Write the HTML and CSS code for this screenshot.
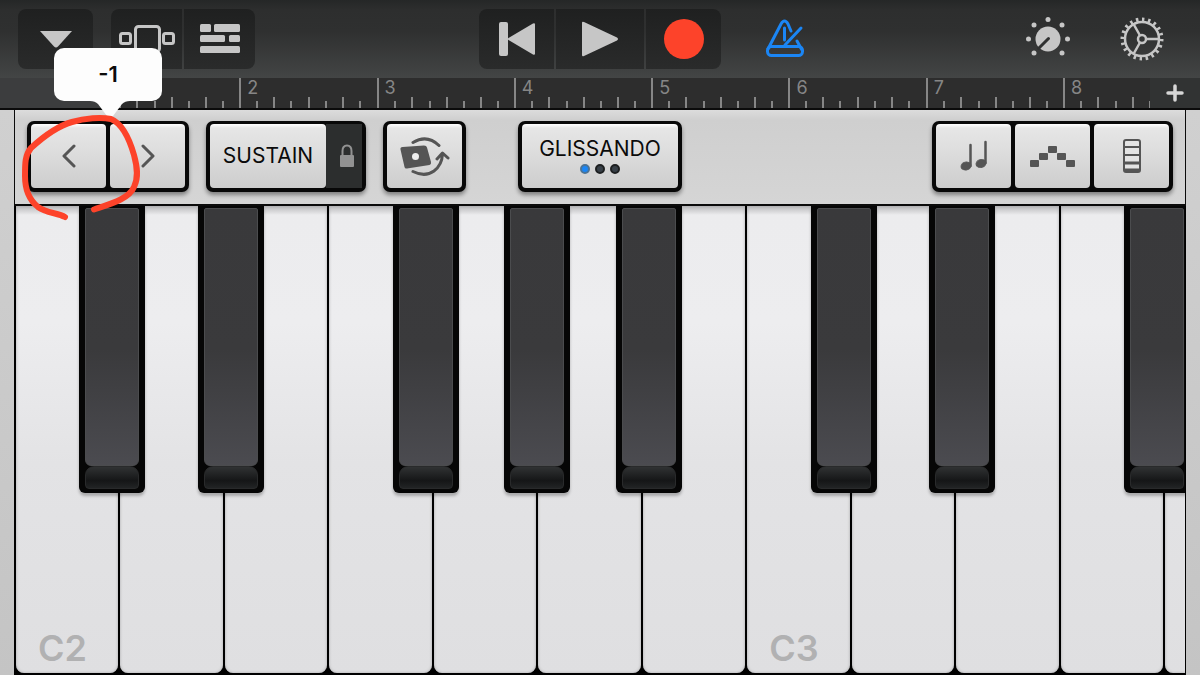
FILE: index.html
```html
<!DOCTYPE html>
<html lang="en">
<head>
  <meta charset="UTF-8">
  <meta name="viewport" content="width=device-width, initial-scale=1.0">
  <title>Keyboard</title>
  <link rel="stylesheet" href="styles.css">
</head>
<body>
  <header class="control-bar">
    <div class="bar-left">
      <div class="button-group">
        <button class="bar-button" aria-label="Menu">
          <svg width="34" height="18" viewBox="0 0 34 18"><path d="M1 1h32L19 16.500q-2 2-4 0z" fill="#c6c6c6"/></svg>
        </button>
      </div>
      <div class="button-group">
        <button class="bar-button view" aria-label="Instruments">
          <svg width="56" height="30" viewBox="0 0 56 30" fill="none" stroke="#c6c6c6" stroke-width="3">
            <rect x="1.500" y="9.500" width="10" height="10" rx="2"/>
            <rect x="16.500" y="2.500" width="24" height="25" rx="3"/>
            <rect x="44.500" y="9.500" width="10" height="10" rx="2"/>
          </svg>
        </button>
        <button class="bar-button view" aria-label="Tracks">
          <svg width="40" height="30" viewBox="0 0 40 30" fill="#c6c6c6">
            <rect width="11" height="8" rx="1.500"/><rect x="14" width="26" height="8" rx="1.500"/>
            <rect y="11" width="25" height="7" rx="1.500"/><rect x="29" y="11" width="11" height="7" rx="1.500"/>
            <rect y="22" width="40" height="7" rx="1.500"/>
          </svg>
        </button>
      </div>
    </div>
    <div class="button-group">
      <button class="bar-button" aria-label="Go to beginning">
        <svg width="38" height="36" viewBox="0 0 38 36" fill="#c6c6c6">
          <rect x="1" y="1" width="9" height="34" rx="2"/>
          <path d="M35 2.500q2-1 2 1v29q0 2-2 1L10.500 19q-1.500-1 0-2z"/>
        </svg>
      </button>
      <button class="bar-button play" aria-label="Play">
        <svg width="38" height="36" viewBox="0 0 38 36" fill="#c6c6c6"><path d="M1 2q0-2 2-1l33 15.500q2 1.500 0 3L3 35q-2 1-2-1z"/></svg>
      </button>
      <button class="bar-button" aria-label="Record">
        <svg width="40" height="40" viewBox="0 0 40 40"><circle cx="20" cy="20" r="20" fill="#fd432a"/></svg>
      </button>
    </div>
    <div class="bar-right">
      <button class="icon-button metronome" aria-label="Metronome">
        <svg width="40" height="40" viewBox="0 0 40 40" fill="none" stroke="#1b86f5" stroke-width="3" stroke-linecap="round" stroke-linejoin="round">
          <path d="M26 12l-3-7q-3.500-6-7 0L3 30"/>
          <path d="M32 22l5 9"/>
          <rect x="2.500" y="27.500" width="35" height="9" rx="4"/>
          <path d="M19.500 9v12M20 26l16-17"/>
        </svg>
      </button>
      <button class="icon-button knob" aria-label="Track controls">
        <svg width="44" height="44" viewBox="0 0 44 44" fill="#c6c6c6">
          <circle cx="22" cy="22" r="12.500"/>
          <path d="M22.500 21.500l-10 10" stroke="#303131" stroke-width="3" stroke-linecap="round"/>
          <circle cx="22" cy="2.500" r="2.500"/><circle cx="8" cy="8" r="2.500"/><circle cx="36" cy="8" r="2.500"/>
          <circle cx="2.500" cy="22" r="2.500"/><circle cx="41.500" cy="22" r="2.500"/>
          <circle cx="8" cy="36" r="2.500"/><circle cx="36" cy="36" r="2.500"/>
        </svg>
      </button>
      <button class="icon-button" aria-label="Settings">
        <svg width="44" height="44" viewBox="0 0 44 44" fill="none" stroke="#c6c6c6">
          <circle cx="22" cy="22" r="17" stroke-width="2.500"/>
          <circle cx="22" cy="22" r="19.500" stroke-width="4" pathLength="100" stroke-dasharray="2 3"/>
          <circle cx="22" cy="22" r="4" stroke-width="2.500"/>
          <path d="M26 22h13M20 18.500L13.500 7M20 25.500L13.500 37" stroke-width="2.500"/>
        </svg>
      </button>
    </div>
  </header>

  <div class="timeline">
    <div class="ruler">
      <div class="measure"></div>
      <div class="measure">2</div>
      <div class="measure">3</div>
      <div class="measure">4</div>
      <div class="measure">5</div>
      <div class="measure">6</div>
      <div class="measure">7</div>
      <div class="measure">8</div>
    </div>
    <button class="add-section" aria-label="Add section">
      <svg width="18" height="18" viewBox="0 0 18 18"><path d="M9 2v14M2 9h14" stroke="#d6d6d6" stroke-width="3.500" stroke-linecap="round"/></svg>
    </button>
  </div>

  <main class="instrument">
    <div class="toolbar">
      <div class="tools">
        <div class="pad-group octave">
          <button class="pad" aria-label="Octave down">
            <svg width="14" height="24" viewBox="0 0 14 24"><path d="M12 2L2 12l10 10" fill="none" stroke="#555" stroke-width="3" stroke-linecap="round" stroke-linejoin="round"/></svg>
          </button>
          <button class="pad" aria-label="Octave up">
            <svg width="14" height="24" viewBox="0 0 14 24"><path d="M2 2l10 10L2 22" fill="none" stroke="#555" stroke-width="3" stroke-linecap="round" stroke-linejoin="round"/></svg>
          </button>
          <output class="callout">-1
            <svg class="callout-tail" width="40" height="18" viewBox="0 0 40 18"><path d="M0 0h40q-5 0-8 3L23 15q-3 3-6 0L8 3Q5 0 0 0z" fill="#fdfdfd"/></svg>
          </output>
          <svg class="marker" width="124" height="112" viewBox="0 0 124 112">
            <path d="M48 107C41 103 29 103 21 97C11 89 8 77 8 66C8 53 8 45 14 38C27 26 41 16 55 12C68 8 84 7 94 9C106 14 113 31 117 45C120 56 122 67 117 77C112 89 93 94 77 99.500" fill="none" stroke="#fd432a" stroke-width="6" stroke-linecap="round" stroke-linejoin="round"/>
          </svg>
        </div>
        <div class="pad-group">
          <button class="pad sustain">SUSTAIN</button>
          <button class="lock" aria-label="Lock sustain">
            <svg width="16" height="24" viewBox="0 0 16 24"><path d="M3.500 12V7q0-5.500 4.500-5.500T12.500 7v5" fill="none" stroke="#929292" stroke-width="2"/><rect x="1" y="11" width="14" height="12" rx="1" fill="#929292"/></svg>
          </button>
        </div>
        <div class="pad-group">
          <button class="pad" aria-label="Flip keyboard">
            <svg width="50" height="40" viewBox="0 0 50 40">
              <g fill="none" stroke="#555" stroke-width="3" stroke-linecap="round" stroke-linejoin="round">
                <path d="M13 6.500Q27-2 39 9.500M13 35.500Q25 41.500 34 35Q42 29 42.500 18M37 23l5.500-6 5.500 5" />
              </g>
              <path d="M2.500 11L24 9.500q2.500 0 3 2L31 26q.500 2.500-1.500 3L7 32.500q-2 .500-2.500-1.500L.500 13.500q-.500-2.500 2-2.500z" fill="#555"/>
              <circle cx="15.500" cy="20.500" r="3.500" fill="#eee"/>
            </svg>
          </button>
        </div>
      </div>
      <div class="pad-group">
        <button class="pad glissando">
          GLISSANDO
          <span class="dots"><i class="dot active"></i><i class="dot"></i><i class="dot"></i></span>
        </button>
      </div>
      <div class="tools end">
        <div class="pad-group">
          <button class="pad" aria-label="Scale">
            <svg width="30" height="32" viewBox="0 0 30 32" fill="#555" stroke="#555">
              <ellipse cx="7" cy="26" rx="5" ry="4" transform="rotate(-15 7 26)"/><path d="M11.500 26V5" stroke-width="2.500" stroke-linecap="round"/>
              <ellipse cx="22" cy="23.500" rx="5" ry="4" transform="rotate(-15 22 23.500)"/><path d="M26.500 23V2" stroke-width="2.500" stroke-linecap="round"/>
            </svg>
          </button>
          <button class="pad" aria-label="Arpeggiator">
            <svg width="46" height="22" viewBox="0 0 46 22" fill="#555">
              <rect x="0" y="15" width="9" height="7" rx="1"/><rect x="9" y="8" width="9" height="7" rx="1"/>
              <rect x="18" y="1" width="9" height="7" rx="1"/><rect x="27" y="8" width="9" height="7" rx="1"/>
              <rect x="36" y="15" width="9" height="7" rx="1"/>
            </svg>
          </button>
          <button class="pad" aria-label="Keyboard layout">
            <svg width="18" height="34" viewBox="0 0 18 34">
              <rect x="1" y="1" width="16" height="32" rx="2" fill="#e4e4e4" stroke="#555" stroke-width="2"/>
              <path d="M2 8h14M2 16h14" stroke="#555" stroke-width="2"/>
              <path d="M2 24h14M2 31h14" stroke="#555" stroke-width="3"/>
            </svg>
          </button>
        </div>
      </div>
    </div>

    <div class="keyboard">
      <div class="note"><button class="white-key">C2</button><button class="black-key low" aria-label="C sharp 2"></button></div>
      <div class="note"><button class="white-key" aria-label="D2"></button><button class="black-key high" aria-label="D sharp 2"></button></div>
      <div class="note"><button class="white-key" aria-label="E2"></button></div>
      <div class="note"><button class="white-key" aria-label="F2"></button><button class="black-key low" aria-label="F sharp 2"></button></div>
      <div class="note"><button class="white-key" aria-label="G2"></button><button class="black-key" aria-label="G sharp 2"></button></div>
      <div class="note"><button class="white-key" aria-label="A2"></button><button class="black-key high" aria-label="A sharp 2"></button></div>
      <div class="note"><button class="white-key" aria-label="B2"></button></div>
      <div class="note"><button class="white-key">C3</button><button class="black-key low" aria-label="C sharp 3"></button></div>
      <div class="note"><button class="white-key" aria-label="D3"></button><button class="black-key high" aria-label="D sharp 3"></button></div>
      <div class="note"><button class="white-key" aria-label="E3"></button></div>
      <div class="note"><button class="white-key" aria-label="F3"></button><button class="black-key low" aria-label="F sharp 3"></button></div>
      <div class="note"><button class="white-key" aria-label="G3"></button></div>
    </div>
  </main>
</body>
</html>
```
FILE: styles.css
```css
* {
  box-sizing: border-box;
}
body {
  margin: 0;
  height: 100vh;
  display: flex;
  flex-direction: column;
  overflow: hidden;
  font-family: Inter, "Liberation Sans", sans-serif;
  background: #000;
  user-select: none;
}
button {
  margin: 0;
  padding: 0;
  border: 0;
  background: none;
  font-family: inherit;
  color: inherit;
}
svg {
  display: block;
}

/* Control bar */
.control-bar {
  display: grid;
  grid-template-columns: 1fr auto 1fr;
  align-items: center;
  padding: 9px 18px;
  background: linear-gradient(#252727 0, #2d2e2e 10px, #2f3030 40%, #434545);
}
.bar-left,
.bar-right {
  display: flex;
  align-items: center;
  gap: 18px;
}
.bar-right {
  padding-right: 18px;
}
.button-group {
  display: flex;
  gap: 2px;
  border-radius: 8px;
  overflow: hidden;
}
.bar-button {
  display: flex;
  align-items: center;
  justify-content: center;
  width: 75px;
  height: 60px;
  background: linear-gradient(#1f2020, #2a2b2b);
}
.bar-button.view {
  width: 71px;
}
.bar-button.play {
  width: 88px;
}
.icon-button {
  display: flex;
}
.metronome {
  margin-left: 44px;
}
.knob {
  margin-left: auto;
  margin-right: 32px;
}

/* Timeline */
.timeline {
  display: flex;
  height: 32px;
  padding-left: 102px;
  background: #3c3d3e;
  border-bottom: 2px solid #0b0b0b;
}
.ruler {
  flex: 1;
  display: flex;
  overflow: hidden;
  background: #2d2d2d;
}
.measure {
  flex: 0 0 13.1%;
  padding-left: 6px;
  border-left: 2px solid #868686;
  font-size: 18px;
  line-height: 20px;
  color: #868686;
  background:
    repeating-linear-gradient(to right, #868686 0 2px, transparent 2px 12.5%) border-box bottom / 100% 7px no-repeat,
    repeating-linear-gradient(to right, #868686 0 2px, transparent 2px 25%) border-box bottom / 100% 11px no-repeat;
}
.add-section {
  width: 50px;
  display: flex;
  align-items: center;
  justify-content: center;
  background: #313333;
}

/* Instrument */
.instrument {
  flex: 1;
  min-height: 0;
  display: flex;
  flex-direction: column;
  padding: 0 14px;
  background: linear-gradient(#d0d0d0, #c4c4c4);
}
.toolbar {
  display: grid;
  grid-template-columns: 1fr auto 1fr;
  padding: 11px 12px 12px;
  border: 1px solid #0b0b0b;
  border-top: 0;
  border-bottom-width: 2px;
  background: linear-gradient(#dcdcdc, #cfcfcf 10px, #d5d5d5);
}
.tools {
  display: flex;
  gap: 17px;
}
.tools.end {
  justify-content: flex-end;
}
.pad-group {
  display: flex;
  gap: 4px;
  padding: 3px 4px 4px;
  border-radius: 7px;
  background: #080808;
  box-shadow: 0 3px 4px rgba(0, 0, 0, 0.4);
}
.pad {
  display: flex;
  align-items: center;
  justify-content: center;
  width: 75px;
  height: 64px;
  border-radius: 4px;
  background: linear-gradient(#fff 0, #e6e6e6 4px, #dedede 40%, #cdcdcd);
  font-size: 21px;
  line-height: 24px;
  color: #0b0b0b;
}
.sustain {
  width: 116px;
}
.lock {
  display: flex;
  align-items: center;
  justify-content: center;
  width: 36px;
  margin-left: -4px;
  padding-left: 6px;
  background: #2c2e2e;
}
.glissando {
  flex-direction: column;
  gap: 3px;
  width: 156px;
  padding-bottom: 2px;
}
.dots {
  display: flex;
  gap: 5px;
}
.dot {
  width: 10px;
  height: 10px;
  border: 2px solid #1d1f20;
  border-radius: 50%;
  background: #384048;
}
.dot.active {
  border-color: #4c7395;
  background: #1b86f5;
}

/* Octave value shown over the arrows */
.octave {
  position: relative;
  z-index: 2;
}
.callout {
  position: absolute;
  top: -73px;
  left: 27px;
  width: 108px;
  border-radius: 10px;
  background: #fdfdfd;
  font-size: 22px;
  font-weight: 600;
  line-height: 53px;
  text-align: center;
  color: #0b0b0b;
}
.callout-tail {
  position: absolute;
  top: 100%;
  left: 36px;
}
.marker {
  position: absolute;
  top: -11px;
  left: -10px;
  pointer-events: none;
}

/* Keys */
.keyboard {
  flex: 1;
  min-height: 0;
  display: flex;
  overflow: hidden;
  padding-bottom: 2px;
  border: 1px solid #000;
  border-width: 0 1px;
  background: #000;
}
.note {
  position: relative;
  flex: 0 0 8.93%;
}
.white-key {
  display: flex;
  align-items: flex-end;
  width: calc(100% - 2px);
  height: 100%;
  margin-left: 1px;
  padding: 0 0 3px 22px;
  border-radius: 0 0 8px 8px;
  background: linear-gradient(#b9b9bb 0, #ececee 9px, #ededef 25%, #e3e3e5 55%, #dfdfe1);
  box-shadow: inset 0 0 3px #a8a8aa;
  font-size: 36px;
  font-weight: 600;
  line-height: 44px;
  color: #b1b1b2;
}
.black-key {
  position: absolute;
  z-index: 1;
  top: 0;
  right: -33px;
  width: 66px;
  height: calc(61% + 2px);
  border-radius: 0 0 6px 6px;
  background: #060606;
  box-shadow: 0 3px 3px rgba(0, 0, 0, 0.25);
}
.black-key.low {
  right: -26px;
}
.black-key.high {
  right: -40px;
}
.black-key::before {
  content: "";
  position: absolute;
  inset: 2px 6px 27px;
  border: 1px solid #4b4c4e;
  border-radius: 2px 2px 6px 6px;
  background: linear-gradient(#39393b, #3a3a3c 55%, #4b4b50);
}
.black-key::after {
  content: "";
  position: absolute;
  inset: auto 6px 4px;
  height: 21px;
  border: 1px solid #292a2b;
  border-radius: 9px 9px 4px 4px;
  background: linear-gradient(#303233, #151617 65%, #222425);
}
```
